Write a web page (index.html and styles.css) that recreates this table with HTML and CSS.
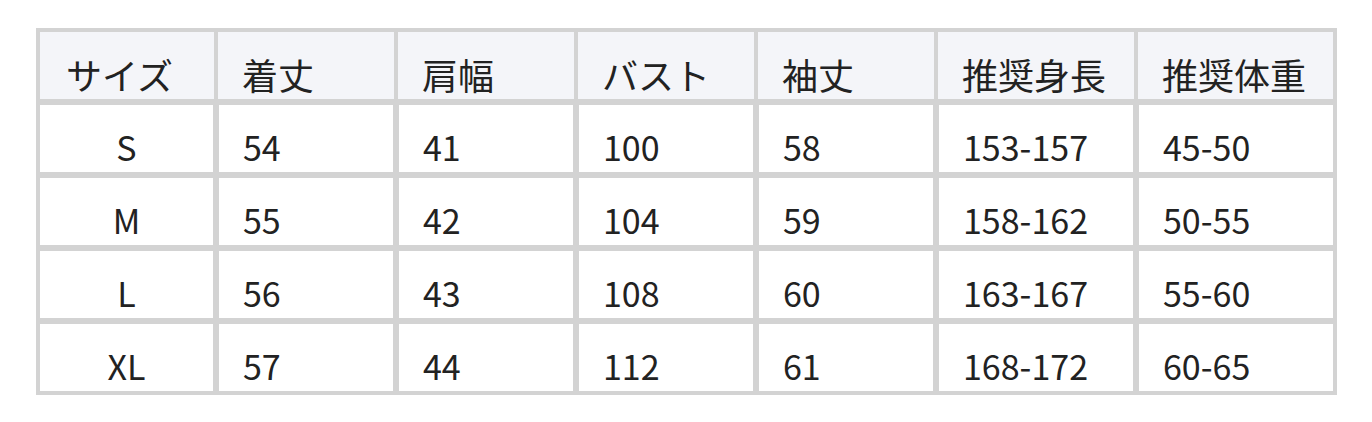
FILE: index.html
```html
<!DOCTYPE html>
<html lang="ja">
<head>
<meta charset="utf-8">
<title>サイズ表</title>
<link rel="stylesheet" href="styles.css">
</head>
<body>
<div class="page">
  <table class="size-table">
    <thead>
      <tr>
        <th class="c-size">サイズ</th>
        <th class="c-std">着丈</th>
        <th class="c-std">肩幅</th>
        <th class="c-std">バスト</th>
        <th class="c-std">袖丈</th>
        <th class="c-wide">推奨身長</th>
        <th class="c-wide">推奨体重</th>
      </tr>
    </thead>
    <tbody>
      <tr><td class="size">S</td><td>54</td><td>41</td><td>100</td><td>58</td><td>153-157</td><td>45-50</td></tr>
      <tr><td class="size">M</td><td>55</td><td>42</td><td>104</td><td>59</td><td>158-162</td><td>50-55</td></tr>
      <tr><td class="size">L</td><td>56</td><td>43</td><td>108</td><td>60</td><td>163-167</td><td>55-60</td></tr>
      <tr><td class="size">XL</td><td>57</td><td>44</td><td>112</td><td>61</td><td>168-172</td><td>60-65</td></tr>
    </tbody>
  </table>
</div>
</body>
</html>
```
FILE: styles.css
```css
html, body {
  margin: 0;
  padding: 0;
  background: #ffffff;
}

.page {
  padding: 28px 36px;
  font-family: "Noto Sans CJK JP", "Noto Sans", sans-serif;
  color: #222222;
}

.size-table {
  width: 1300px;
  table-layout: fixed;
  border-collapse: separate;
  border-spacing: 0;
  border: 1px solid #d3d3d3;
  background: #ffffff;
  font-size: 34px;
}

.size-table th,
.size-table td {
  box-sizing: border-box;
  height: 73px;
  padding: 18px 0 1px 24px;
  line-height: 48px;
  text-align: left;
  vertical-align: top;
  white-space: nowrap;
}

.size-table th {
  font-size: 36px;
  font-weight: 400;
  background: #f4f5f9;
  border-style: solid;
  border-color: #d3d3d3;
  border-width: 3px 2px 3px 2px;
}

.size-table th:first-child { border-left-width: 3px; }
.size-table th:last-child { border-right-width: 3px; }

.size-table td {
  border: 3px solid #d3d3d3;
}

.size-table .c-size { width: 179px; padding-left: 26px; }
.size-table .c-std { width: 180px; }
.size-table .c-wide { width: 200px; }

.size-table td.size {
  text-align: center;
  padding-left: 0;
}
```
